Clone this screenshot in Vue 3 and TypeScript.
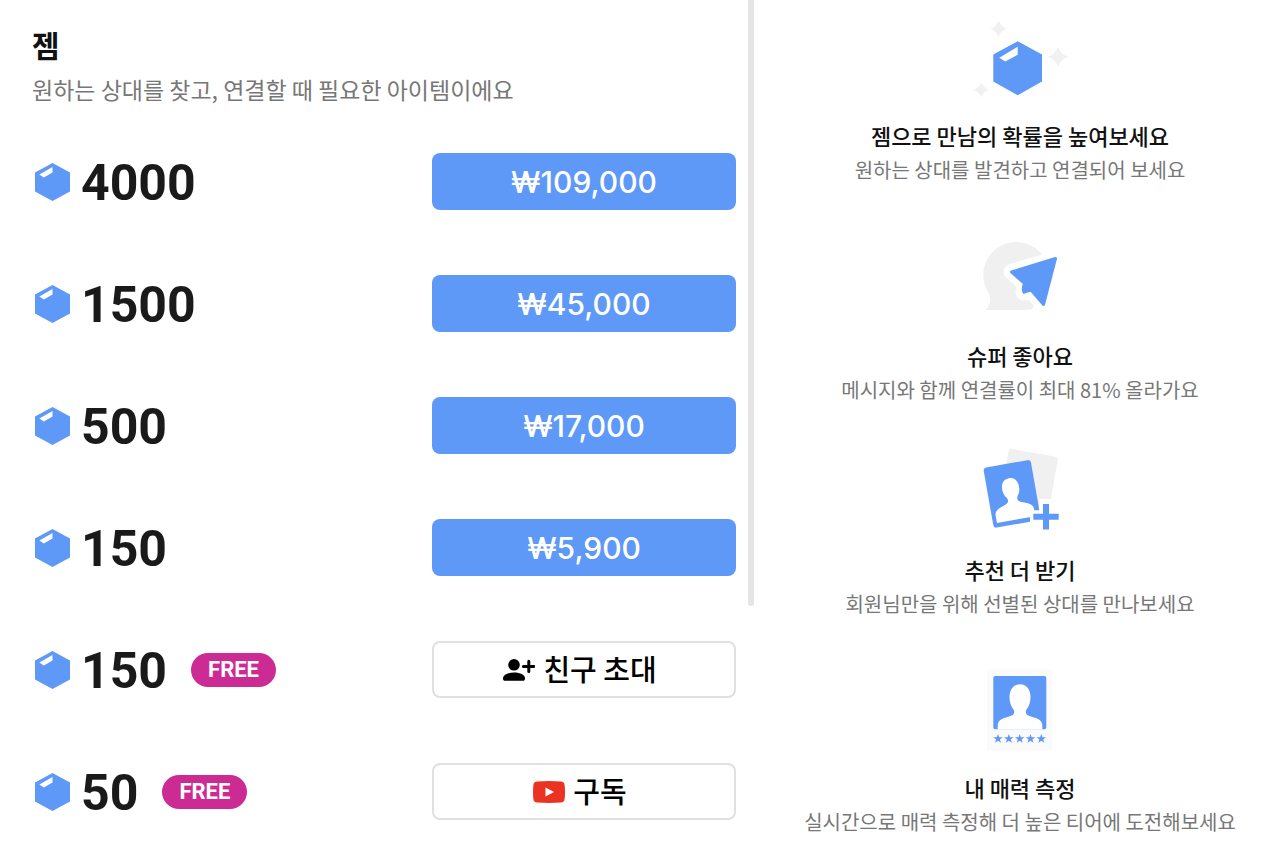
<script setup lang="ts">
interface GemPack {
  amount: number
  price?: string
  action?: 'invite' | 'subscribe'
  label?: string
}

interface Feature {
  icon: 'gem' | 'plane' | 'cards' | 'rating'
  height: number
  title: string
  text: string
}

const packs: GemPack[] = [
  { amount: 4000, price: '₩109,000' },
  { amount: 1500, price: '₩45,000' },
  { amount: 500, price: '₩17,000' },
  { amount: 150, price: '₩5,900' },
  { amount: 150, action: 'invite', label: '친구 초대' },
  { amount: 50, action: 'subscribe', label: '구독' },
]

const features: Feature[] = [
  { icon: 'gem', height: 80, title: '젬으로 만남의 확률을 높여보세요', text: '원하는 상대를 발견하고 연결되어 보세요' },
  { icon: 'plane', height: 94, title: '슈퍼 좋아요', text: '메시지와 함께 연결률이 최대 81% 올라가요' },
  { icon: 'cards', height: 88, title: '추천 더 받기', text: '회원님만을 위해 선별된 상대를 만나보세요' },
  { icon: 'rating', height: 92, title: '내 매력 측정', text: '실시간으로 매력 측정해 더 높은 티어에 도전해보세요' },
]

const sparkles = [
  { x: 43.7, y: 8.7, s: 8.3 },
  { x: 103, y: 36.7, s: 10.3 },
  { x: 26.3, y: 69.7, s: 7.7 },
]

const stars = [43, 53.8, 64.7, 75.5, 86.3]
</script>

<template>
  <main class="page">
    <section class="shop">
      <div class="shop-content">
        <h1 class="shop-title">젬</h1>
        <p class="shop-text">원하는 상대를 찾고, 연결할 때 필요한 아이템이에요</p>
        <ul class="packs">
          <li v-for="(pack, i) in packs" :key="i" class="pack">
            <svg class="gem" viewBox="0 0 35 38" aria-hidden="true">
              <path class="blue" d="M17.5 0 35 9.5V28.5L17.5 38 0 28.5V9.5Z" />
              <path class="white" d="M17.5 4V9.6L8.8 14.4 4.4 11.6Z" />
            </svg>
            <span class="amount">{{ pack.amount }}</span>
            <span v-if="pack.action" class="free">FREE</span>
            <button v-if="pack.price" type="button" class="button price">{{ pack.price }}</button>
            <button v-else type="button" class="button outline">
              <svg v-if="pack.action === 'invite'" class="button-icon" viewBox="0 0 32 22" aria-hidden="true">
                <circle cx="11" cy="5.8" r="5.8" />
                <path d="M0 19.5C0 15.8 4.5 13.6 11 13.6S22 15.8 22 19.5C22 21 21.2 21.8 20 21.8H2C.8 21.8 0 21 0 19.5Z" />
                <path class="invite-plus" d="M25.8 2.2V12.6M20.4 7.4H30.8" />
              </svg>
              <svg v-else class="button-icon" viewBox="0 0 32 22" aria-hidden="true">
                <path class="red" d="M4 .5Q16-.4 28 .5 31.2.8 31.6 4 32.4 11 31.6 18 31.2 21.2 28 21.5 16 22.4 4 21.5.8 21.2.4 18-.4 11 .4 4 .8.8 4 .5Z" />
                <path class="white" d="M12.5 6.5 21 11 12.5 15.5Z" />
              </svg>
              <span class="button-label">{{ pack.label }}</span>
            </button>
          </li>
        </ul>
      </div>
      <div class="scroll-thumb"></div>
    </section>

    <section class="features">
      <article v-for="feature in features" :key="feature.title" class="feature">
        <svg class="feature-icon" width="130" :height="feature.height" :viewBox="`0 0 130 ${feature.height}`" aria-hidden="true">
          <g v-if="feature.icon === 'gem'">
            <path
              v-for="s in sparkles"
              :key="s.x"
              class="gray"
              :transform="`translate(${s.x} ${s.y}) scale(${s.s})`"
              d="M0-1Q.25-.25 1 0 .25.25 0 1-.25.25-1 0-.25-.25 0-1Z"
            />
            <path class="blue" d="M62.7 21.3 87 34.6V61.6L62.7 75.3 38.3 61.6V34.6Z" />
            <path class="white" d="M62.7 26.8V34.8L50.3 41.4 44.3 37.8Z" />
          </g>
          <g v-else-if="feature.icon === 'plane'">
            <path class="bubble" d="M31 84Q38 75 33 66A33 33 0 1 1 92 61L77 83Q71 84 60 84Z" />
            <path class="plane halo" d="M56.5 46 100 33 88.5 78.5 77 65.5 68.5 66.5 69.5 57Z" />
            <path class="plane" d="M56.5 46 100.5 32.5 88.5 78.5 76.5 64.5Q73 64 69 66.2 67.5 62 69.5 57.5Z" />
          </g>
          <g v-else-if="feature.icon === 'cards'">
            <rect class="bubble" width="50" height="52" rx="2.5" transform="translate(54 2.4) rotate(10)" />
            <g transform="translate(28.2 22) rotate(-10)">
              <rect class="blue" width="48" height="61" rx="3" />
              <path class="white" d="M4 56.5V49C4 43 10.5 42 15.5 40 19 38.5 19.5 36.5 18 33.5 16 31 15 28.5 15 24.5 15 18 18.5 14.5 23.5 14.5S32 18 32 24.5C32 28.5 31 31 29 33.5 27.5 36.5 28 38.5 31.5 40 36.5 42 43 43 43 49V56.5Z" />
            </g>
            <path class="plus-halo" d="M91 53V88M75 70.7H107" />
            <path class="plus" d="M91 58V83.4M78.3 70.7H103.7" />
          </g>
          <g v-else>
            <rect class="paper" x="32" y="9.5" width="65" height="81" />
            <rect class="blue" x="38.3" y="16" width="53" height="53.3" rx="2" />
            <path class="white" d="M42.7 69.4V65.5C42.7 58.8 50 58 55.5 56 59.5 54.5 60 52 58.5 49.5 56 46.5 54.5 42 54.5 37 54.5 29 59 24.3 65 24.3S75.5 29 75.5 37C75.5 42 74 46.5 71.5 49.5 70 52 70.5 54.5 74.5 56 80 58 87.3 58.8 87.3 65.5V69.4Z" />
            <path
              v-for="x in stars"
              :key="x"
              class="blue"
              :transform="`translate(${x} 78.8)`"
              d="M0-4.8 1.2-1.5H4.7L1.9.6 3 4 0 2-3 4-1.9.6-4.7-1.5H-1.2Z"
            />
          </g>
        </svg>
        <h2 class="feature-title">{{ feature.title }}</h2>
        <p class="feature-text">{{ feature.text }}</p>
      </article>
    </section>
  </main>
</template>

<style>
body {
  margin: 0;
  background: #fff;
}
</style>

<style scoped>
.page {
  display: grid;
  grid-template-columns: 19fr 13fr;
  min-height: 100vh;
  background: #fff;
  color: #111;
  font-family: "Noto Sans CJK KR", "Noto Sans", sans-serif;
}

h1,
h2,
p,
ul {
  margin: 0;
  padding: 0;
}

.shop {
  display: flex;
  padding-right: 6px;
}

.shop-content {
  flex: 1;
  padding: 24px 12px 24px 32px;
}

.scroll-thumb {
  width: 6px;
  height: 606px;
  border-radius: 0 0 3px 3px;
  background: #e5e5e5;
}

.shop-title {
  font-size: 30px;
  line-height: 40px;
  font-weight: 700;
}

.shop-text {
  margin-top: 5px;
  font-size: 23px;
  line-height: 40px;
  color: #777;
}

.packs {
  display: grid;
  gap: 65px;
  margin-top: 44px;
  list-style: none;
}

.pack {
  display: flex;
  align-items: center;
  height: 57px;
  padding-left: 3px;
}

.gem {
  width: 35px;
  height: 38px;
  margin-right: 11px;
}

.amount {
  padding-top: 4px;
  font-family: Roboto, "Noto Sans", sans-serif;
  font-size: 50px;
  line-height: 53px;
  font-weight: 700;
  color: #1a1a1a;
}

.free {
  margin-left: 24px;
  padding: 0 17px;
  border-radius: 17px;
  background: #cd2b94;
  color: #fff;
  font-family: Roboto, "Noto Sans", sans-serif;
  font-size: 22px;
  line-height: 34px;
  font-weight: 700;
}

.button {
  display: flex;
  align-items: center;
  justify-content: center;
  gap: 8px;
  box-sizing: border-box;
  width: 304px;
  height: 57px;
  margin-left: auto;
  padding: 0;
  border: 0;
  border-radius: 8px;
  cursor: pointer;
}

.price {
  background: #5f99f7;
  color: #fff;
  font-family: Inter, "Noto Sans CJK KR", sans-serif;
  font-size: 30px;
  font-weight: 500;
}

.outline {
  padding-right: 8px;
  border: 2px solid #e0e0e0;
  background: #fff;
  color: #000;
  font-family: "Noto Sans CJK KR", sans-serif;
  font-size: 29px;
  line-height: 40px;
  font-weight: 500;
}

.button-icon {
  width: 32px;
  height: 22px;
}

.button-label {
  padding-bottom: 4px;
}

.features {
  display: flex;
  flex-direction: column;
  gap: 40px;
  padding-top: 20px;
  text-align: center;
}

.feature-icon {
  display: block;
  margin: 0 auto 20px;
}

.feature-title {
  padding-bottom: 2px;
  font-size: 22px;
  line-height: 31px;
  font-weight: 500;
}

.feature-text {
  font-size: 20px;
  line-height: 33px;
  color: #777;
}

.blue {
  fill: #5f99f7;
}

.white {
  fill: #fff;
}

.red {
  fill: #ea3323;
}

.gray {
  fill: #f1f1f1;
}

.bubble {
  fill: #f0f0f0;
}

.paper {
  fill: #fafafa;
}

.plane {
  fill: #5f99f7;
  stroke: #5f99f7;
  stroke-width: 3;
  stroke-linejoin: round;
}

.halo {
  fill: #fff;
  stroke: #fff;
  stroke-width: 16;
}

.plus {
  fill: none;
  stroke: #5f99f7;
  stroke-width: 6;
}

.plus-halo {
  fill: none;
  stroke: #fff;
  stroke-width: 13;
}

.invite-plus {
  fill: none;
  stroke: #000;
  stroke-width: 3;
  stroke-linecap: round;
}
</style>
